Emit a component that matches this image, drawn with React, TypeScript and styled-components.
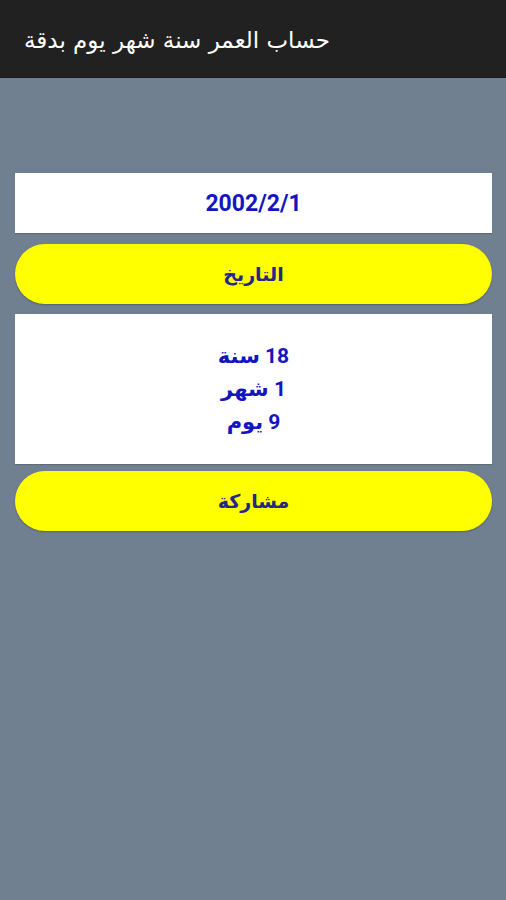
import React from "react";
import styled, { createGlobalStyle } from "styled-components";

const GlobalStyle = createGlobalStyle`
  html, body {
    margin: 0;
    padding: 0;
    background-color: #708090;
  }
  body {
    font-family: Roboto, "DejaVu Sans", "Noto Sans", sans-serif;
  }
`;

const Page = styled.div`
  min-height: 900px;
  background-color: #708090;
  display: flex;
  flex-direction: column;
`;

const AppBar = styled.header`
  height: 78px;
  background-color: #212121;
  border-bottom: 1px solid #1a1a1a;
  box-sizing: border-box;
  display: flex;
  align-items: center;
  padding: 2px 24px 0;
`;

const Title = styled.h1`
  margin: 0;
  font-family: "DejaVu Sans", "Noto Sans", sans-serif;
  font-size: 23px;
  font-weight: 400;
  color: #ffffff;
`;

const Content = styled.main`
  display: flex;
  flex-direction: column;
  padding: 95px 14px 0 15px;
`;

const Box = styled.div<{ $height: number; $spaceAbove?: number }>`
  height: ${(p) => p.$height}px;
  margin-top: ${(p) => p.$spaceAbove ?? 0}px;
  background-color: #ffffff;
  display: flex;
  flex-direction: column;
  align-items: center;
  justify-content: center;
  box-shadow: 0 1px 1px rgba(0, 0, 0, 0.15);
`;

const ValueText = styled.div<{ $size?: number }>`
  font-family: Roboto, "DejaVu Sans", sans-serif;
  font-size: ${(p) => p.$size ?? 21}px;
  font-weight: 700;
  line-height: 33px;
  color: #1515c0;
`;

const PillButton = styled.button<{ $spaceAbove: number }>`
  height: 60px;
  margin-top: ${(p) => p.$spaceAbove}px;
  border: none;
  border-radius: 30px;
  background-color: #ffff00;
  color: #25258a;
  font-family: "DejaVu Sans", Roboto, sans-serif;
  font-size: 19px;
  font-weight: 700;
  cursor: pointer;
  box-shadow: 0 1px 2px rgba(0, 0, 0, 0.25);
`;

const App: React.FC = () => {
  const lines = ["18 سنة", "1 شهر", "9 يوم"];

  return (
    <Page>
      <GlobalStyle />
      <AppBar>
        <Title dir="rtl">حساب العمر سنة شهر يوم بدقة</Title>
      </AppBar>
      <Content>
        <Box $height={60}>
          <ValueText $size={23}>2002/2/1</ValueText>
        </Box>
        <PillButton $spaceAbove={11} dir="rtl">
          التاريخ
        </PillButton>
        <Box $height={150} $spaceAbove={10}>
          {lines.map((line) => (
            <ValueText key={line} dir="rtl">
              {line}
            </ValueText>
          ))}
        </Box>
        <PillButton $spaceAbove={7} dir="rtl">
          مشاركة
        </PillButton>
      </Content>
    </Page>
  );
};

export default App;
